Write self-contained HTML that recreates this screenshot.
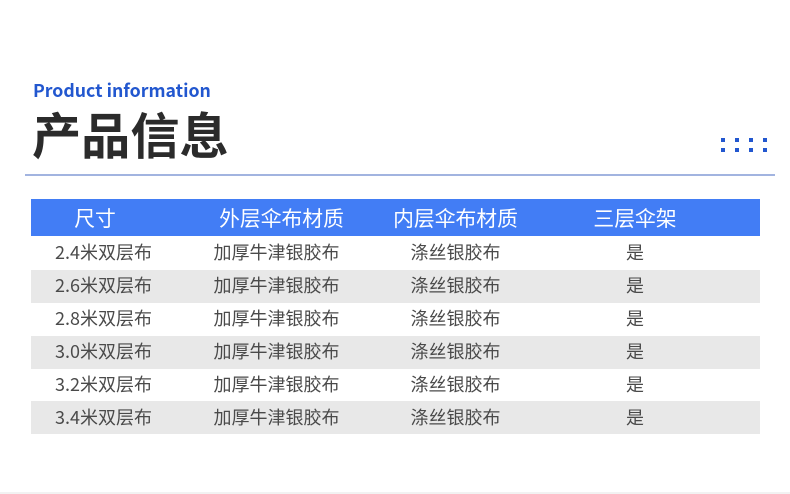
<!DOCTYPE html>
<html lang="zh">
<head>
<meta charset="utf-8">
<style>
html,body{margin:0;padding:0;background:#fff}
#p{position:relative;width:790px;height:494px;overflow:hidden;background:#fff;font-family:"Liberation Sans","Noto Sans CJK SC",sans-serif}
#p div{position:absolute}
.t{white-space:nowrap;font-family:"Noto Sans CJK SC",sans-serif;line-height:1;transform:translateX(-50%)}
.r{font-size:18px;color:#4a4a4a}
.h{font-size:20.8px;color:#fff;top:207px}
.d{width:4px;height:4px;background:#2257cf}
</style>
</head>
<body>
<div id="p">
<div style="left:33px;top:80px;font:700 17.7px/20px 'Noto Sans CJK SC',sans-serif;color:#2257cf;white-space:nowrap">Product information</div>
<div style="left:32px;top:109px;font:700 49.2px/50px 'Noto Sans CJK SC',sans-serif;color:#2b2b2b;white-space:nowrap">产品信息</div>
<div style="left:25px;top:174px;width:750px;height:2px;background:#a2b4e0"></div>

<div class="d" style="left:721px;top:138px"></div><div class="d" style="left:735px;top:138px"></div><div class="d" style="left:749px;top:138px"></div><div class="d" style="left:763px;top:138px"></div>
<div class="d" style="left:721px;top:148px"></div><div class="d" style="left:735px;top:148px"></div><div class="d" style="left:749px;top:148px"></div><div class="d" style="left:763px;top:148px"></div>

<div style="left:31px;top:199px;width:729px;height:37px;background:#427df5"></div>
<div class="t h" style="left:95px">尺寸</div>
<div class="t h" style="left:281.5px">外层伞布材质</div>
<div class="t h" style="left:455.5px">内层伞布材质</div>
<div class="t h" style="left:635px">三层伞架</div>

<div style="left:31px;top:270px;width:729px;height:33px;background:#e8e8e8"></div>
<div style="left:31px;top:336px;width:729px;height:33px;background:#e8e8e8"></div>
<div style="left:31px;top:401px;width:729px;height:33px;background:#e8e8e8"></div>

<div class="t r" style="left:103.5px;top:243px">2.4米双层布</div>
<div class="t r" style="left:276.5px;top:243px">加厚牛津银胶布</div>
<div class="t r" style="left:455.5px;top:243px">涤丝银胶布</div>
<div class="t r" style="left:635px;top:243px">是</div>

<div class="t r" style="left:103.5px;top:276px">2.6米双层布</div>
<div class="t r" style="left:276.5px;top:276px">加厚牛津银胶布</div>
<div class="t r" style="left:455.5px;top:276px">涤丝银胶布</div>
<div class="t r" style="left:635px;top:276px">是</div>

<div class="t r" style="left:103.5px;top:309px">2.8米双层布</div>
<div class="t r" style="left:276.5px;top:309px">加厚牛津银胶布</div>
<div class="t r" style="left:455.5px;top:309px">涤丝银胶布</div>
<div class="t r" style="left:635px;top:309px">是</div>

<div class="t r" style="left:103.5px;top:342px">3.0米双层布</div>
<div class="t r" style="left:276.5px;top:342px">加厚牛津银胶布</div>
<div class="t r" style="left:455.5px;top:342px">涤丝银胶布</div>
<div class="t r" style="left:635px;top:342px">是</div>

<div class="t r" style="left:103.5px;top:375px">3.2米双层布</div>
<div class="t r" style="left:276.5px;top:375px">加厚牛津银胶布</div>
<div class="t r" style="left:455.5px;top:375px">涤丝银胶布</div>
<div class="t r" style="left:635px;top:375px">是</div>

<div class="t r" style="left:103.5px;top:408px">3.4米双层布</div>
<div class="t r" style="left:276.5px;top:408px">加厚牛津银胶布</div>
<div class="t r" style="left:455.5px;top:408px">涤丝银胶布</div>
<div class="t r" style="left:635px;top:408px">是</div>

<div style="left:0;top:492px;width:790px;height:2px;background:#f2f2f2"></div>
</div>
</body>
</html>
